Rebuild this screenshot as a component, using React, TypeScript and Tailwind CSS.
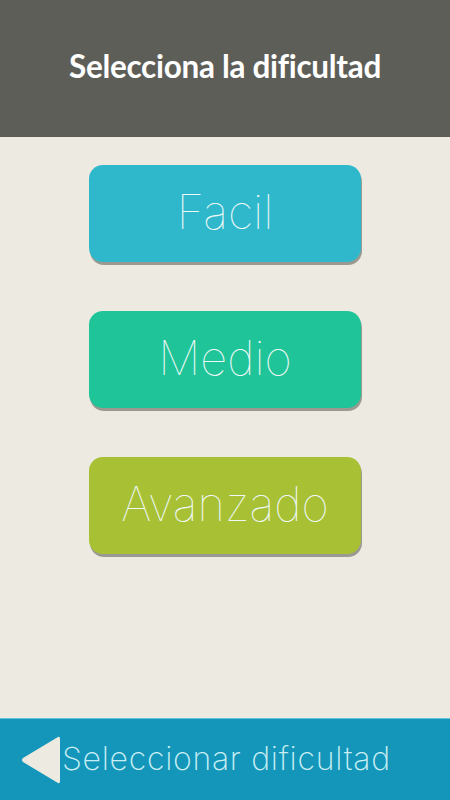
import React from 'react';

const levels = [
  { label: 'Facil', bg: 'bg-[#2fb8cc]' },
  { label: 'Medio', bg: 'bg-[#1fc498]' },
  { label: 'Avanzado', bg: 'bg-[#a8c034]' },
];

export default function App() {
  return (
    <div className="w-[450px] h-[800px] flex flex-col bg-[#edebe1] overflow-hidden">
      <header className="h-[137px] shrink-0 bg-[#5e5e58] flex items-center justify-center">
        <h1 className="text-white text-[31.5px] font-bold tracking-[-0.3px] pb-[4px] font-['Lato',sans-serif]">
          Selecciona la dificultad
        </h1>
      </header>

      <main className="flex-1 flex flex-col items-center pt-[28px] gap-[49px]">
        {levels.map((l) => (
          <button
            key={l.label}
            className={`w-[272px] h-[97px] rounded-[14px] ${l.bg} shadow-[1px_3px_0_#9a9a92] flex items-center justify-center text-[#eef8f6] text-[47px] font-thin font-['Inter',sans-serif] pb-[2px]`}
          >
            {l.label}
          </button>
        ))}
      </main>

      <footer className="h-[82px] shrink-0 bg-[#1396b9] border-t border-[#5fc3da] flex items-center pl-[21px] gap-[1px]">
        <svg width="40" height="48" viewBox="0 0 40 48" className="shrink-0">
          <path d="M37 1 Q39 0 39 3 L39 45 Q39 48 37 47 L2 26 Q0 24 2 22 Z" fill="#edebe1" />
        </svg>
        <span className="text-[#c9eef4] text-[32px] font-extralight font-['Inter',sans-serif] tracking-[0.7px] pb-[2px]">
          Seleccionar dificultad
        </span>
      </footer>
    </div>
  );
}
